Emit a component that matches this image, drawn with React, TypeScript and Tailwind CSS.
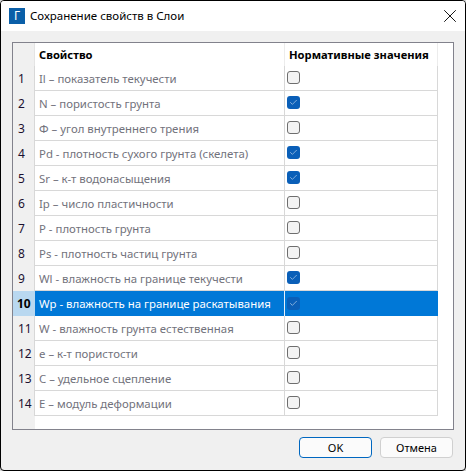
import { X, Check } from "lucide-react"

const rows = [
  { label: "Il – показатель текучести", checked: false },
  { label: "N – пористость грунта", checked: true },
  { label: "Φ – угол внутреннего трения", checked: false },
  { label: "Pd - плотность сухого грунта (скелета)", checked: true },
  { label: "Sr – к-т водонасыщения", checked: true },
  { label: "Ip – число пластичности", checked: false },
  { label: "P - плотность грунта", checked: false },
  { label: "Ps - плотность частиц грунта", checked: false },
  { label: "Wl - влажность на границе текучести", checked: true },
  { label: "Wp - влажность на границе раскатывания", checked: true },
  { label: "W - влажность грунта естественная", checked: false },
  { label: "e – к-т пористости", checked: false },
  { label: "C – удельное сцепление", checked: false },
  { label: "E – модуль деформации", checked: false },
]

function Box({ checked }: { checked: boolean }) {
  if (checked) {
    return (
      <div className="w-[13px] h-[13px] rounded-[3px] bg-[#0a5fb8] flex items-center justify-center">
        <Check className="w-[9px] h-[9px] text-[#dfeaf6]" strokeWidth={1.5} />
      </div>
    )
  }
  return <div className="w-[13px] h-[13px] rounded-[3px] border border-[#6e6e6e] bg-[#f3f3f3]" />
}

export default function App() {
  return (
    <div className="w-[466px] h-[471px] bg-[#d8d8d8] font-['Noto_Sans',sans-serif] text-[11.4px]">
      <div className="w-full h-full flex flex-col border border-black rounded-[4px] overflow-hidden bg-[#f0f0f0]">
        <div className="h-[30px] shrink-0 bg-white flex items-center pl-[8px]">
          <div className="w-4 h-4 bg-[#0a5fa8] flex items-center justify-center text-white text-[12px] leading-none">
            Г
          </div>
          <span className="ml-[5px] text-[11.5px] text-black">Сохранение свойств в Слои</span>
          <X className="w-[22px] h-[22px] ml-auto mr-[4px] text-black" strokeWidth={1} />
        </div>

        <div className="mt-[11px] mx-[11px] h-[388px] shrink-0 border border-[#82828c] bg-white flex flex-col">
          <div className="flex h-[23px] shrink-0">
            <div className="w-[22px] bg-[#f0f0f0] border-r border-[#e4e4e4]" />
            <div className="w-[250px] pl-[4px] pt-[1px] font-bold text-[11.2px] text-black leading-[22px] border-r border-[#ececec]">
              Свойство
            </div>
            <div className="w-[153px] pl-[4px] pt-[1px] font-bold text-[11.2px] text-black leading-[22px] whitespace-nowrap border-r border-[#ececec]">
              Нормативные значения
            </div>
          </div>
          {rows.map((row, i) => {
            const selected = i === 9
            return (
              <div key={i} className="flex h-[25px] shrink-0">
                <div
                  className={
                    selected
                      ? "w-[22px] pl-[4px] bg-[#b9d8f0] text-black font-bold flex items-center text-[12px]"
                      : "w-[22px] pl-[5px] bg-[#f0f0f0] border-r border-[#d8d8d8] text-[#1c1030] flex items-center text-[12px]"
                  }
                >
                  {i + 1}
                </div>
                <div
                  className={
                    selected
                      ? "w-[250px] pl-[4px] pt-[1px] bg-[#0078d7] text-white border-r border-[#e6f0fa] flex items-center whitespace-nowrap"
                      : "w-[250px] pl-[4px] pt-[1px] text-[#72727c] border-r border-b border-[#d8d8d8] flex items-center whitespace-nowrap"
                  }
                >
                  {row.label}
                </div>
                <div
                  className={
                    selected
                      ? "w-[153px] pl-[2px] pb-[1px] bg-[#0078d7] flex items-center"
                      : "w-[153px] pl-[2px] pb-[1px] border-r border-b border-[#d8d8d8] flex items-center"
                  }
                >
                  <Box checked={row.checked} />
                </div>
              </div>
            )
          })}
          <div className="flex-1 flex">
            <div className="w-[22px] bg-[#f0f0f0]" />
          </div>
        </div>

        <div className="flex justify-end gap-[8px] mt-[7px] mr-[12px]">
          <button className="w-[73px] h-[21px] rounded-[4px] border border-[#0067c0] bg-[#fbfbfb] text-[11px] text-black leading-none">
            OK
          </button>
          <button className="w-[73px] h-[21px] rounded-[4px] border border-[#d0d0d0] bg-[#fbfbfb] text-[11px] text-black leading-none">
            Отмена
          </button>
        </div>
      </div>
    </div>
  )
}
